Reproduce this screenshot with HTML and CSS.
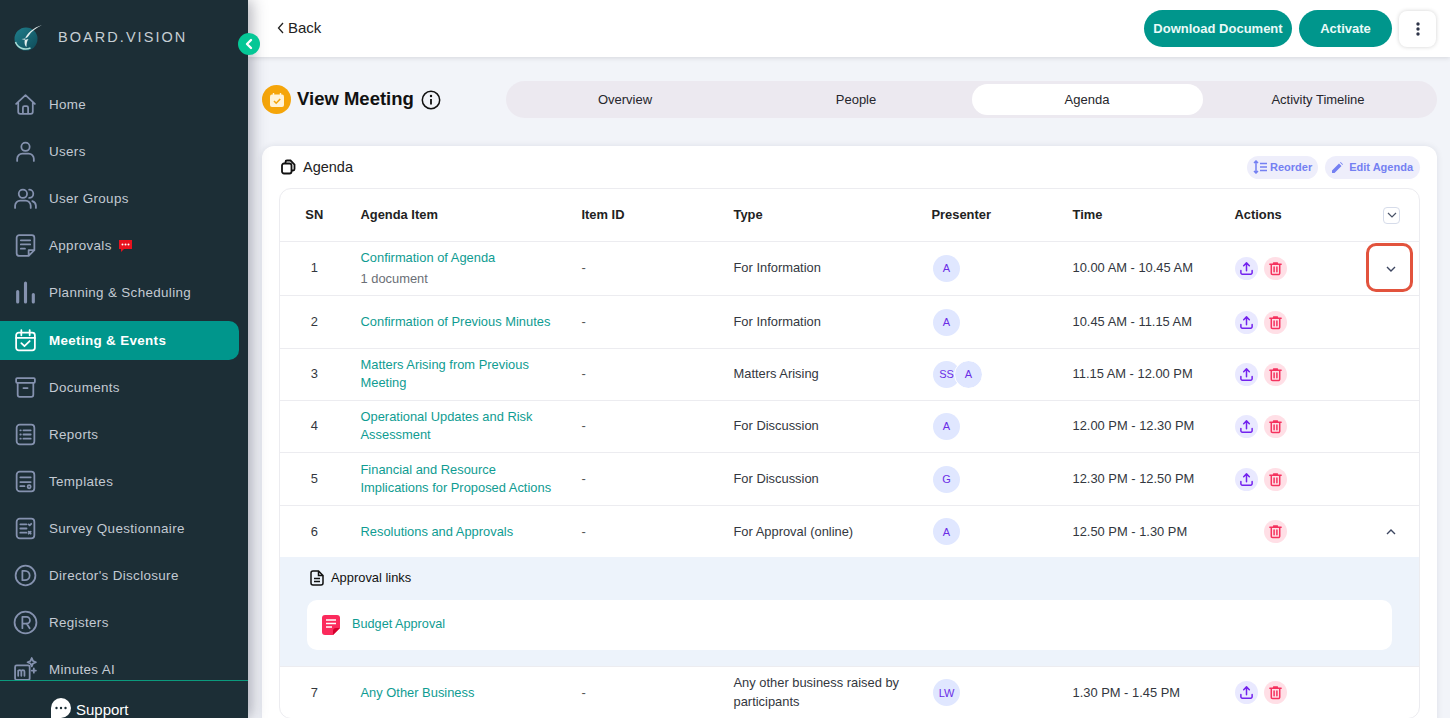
FILE: index.html
```html
<!DOCTYPE html>
<html lang="en">
<head>
    <meta charset="UTF-8">
    <meta name="viewport" content="width=device-width, initial-scale=1.0">
    <title>View Meeting</title>
    <link rel="stylesheet" href="styles.css">
</head>
<body>
<div class="app">

    <!-- Sidebar -->
    <aside class="sidebar">
        <div class="brand">
            <svg class="brand-logo" width="32" height="28" viewBox="0 0 32 28">
                <defs>
                    <linearGradient id="logoFill" x1="0" y1="0" x2="1" y2="1">
                        <stop offset="0" stop-color="#1f7f8c"/>
                        <stop offset="1" stop-color="#0f4a58"/>
                    </linearGradient>
                </defs>
                <circle cx="13" cy="15" r="11.5" fill="url(#logoFill)"/>
                <path d="M2.5 18c2 6 9 8.500 15 6" fill="none" stroke="#a9dcd6" stroke-width="1.600"/>
                <path d="M29 1C20 4 14 9 12 15c-1 4 0 7 1.500 8 0-4 .5-6 2-8-3 1-5 1-7 0 3 0 6-1 7-3 3-5 8-8 13.500-11z" fill="#e3eeee"/>
            </svg>
            <span class="brand-name">BOARD.VISION</span>
        </div>
        <button class="collapse-btn" type="button" aria-label="Collapse">
            <svg width="10" height="12" viewBox="0 0 10 12"><path d="M7 2 3 6l4 4" fill="none" stroke="#fff" stroke-width="2.400" stroke-linecap="round" stroke-linejoin="round"/></svg>
        </button>

        <nav class="nav">
            <a class="nav-item"><svg class="nav-icon" viewBox="0 0 24 24"><path d="M3 11.500 12 3l9 8.500M5 9.500V19a2 2 0 0 0 2 2h10a2 2 0 0 0 2-2V9.500M9.500 21v-6a1.500 1.500 0 0 1 1.500-1.500h2a1.500 1.500 0 0 1 1.500 1.500v6"/></svg>Home</a>
            <a class="nav-item"><svg class="nav-icon" viewBox="0 0 24 24"><circle cx="12" cy="7.500" r="4"/><path d="M4 21v-2a5 5 0 0 1 5-5h6a5 5 0 0 1 5 5v2"/></svg>Users</a>
            <a class="nav-item"><svg class="nav-icon" viewBox="0 0 24 24"><circle cx="9.500" cy="7.500" r="4"/><path d="M2 21v-2a5 5 0 0 1 5-5h5a5 5 0 0 1 5 5v2M15.500 3.500a4 4 0 0 1 0 8M18.500 14.500a5 5 0 0 1 3.500 4.500v2"/></svg>User Groups</a>
            <a class="nav-item"><svg class="nav-icon" viewBox="0 0 24 24"><path d="M15 22H6a2.500 2.500 0 0 1-2.500-2.500v-15A2.500 2.500 0 0 1 6 2h12a2.500 2.500 0 0 1 2.500 2.500V16.500zM15 22v-5.500h5.500M7.500 7h9M7.500 11h9M7.500 15h4"/></svg>Approvals
                <svg class="nav-badge" width="15" height="14" viewBox="0 0 15 14"><path d="M1 1h13v9H6l-3 3v-3H1z" fill="#e8121e"/><circle cx="4.500" cy="5.500" r="1" fill="#fff"/><circle cx="7.500" cy="5.500" r="1" fill="#fff"/><circle cx="10.500" cy="5.500" r="1" fill="#fff"/></svg>
            </a>
            <a class="nav-item"><svg class="nav-icon nav-icon-bars" viewBox="0 0 24 24"><path d="M4.500 11v10M12 3v18M19.500 14v7"/></svg>Planning &amp; Scheduling</a>
            <a class="nav-item active"><svg class="nav-icon" viewBox="0 0 24 24"><rect x="3" y="4.500" width="18" height="17" rx="2.500"/><path d="M3 9.500h18M8 2v5M16 2v5M8 14.500l3 3 5-5"/></svg>Meeting &amp; Events</a>
            <a class="nav-item"><svg class="nav-icon" viewBox="0 0 24 24"><rect x="3" y="3" width="18" height="4.500" rx="1"/><path d="M4.500 7.500V19a2 2 0 0 0 2 2h11a2 2 0 0 0 2-2V7.500M10 12.500h4"/></svg>Documents</a>
            <a class="nav-item"><svg class="nav-icon" viewBox="0 0 24 24"><rect x="3.500" y="2.500" width="17" height="19" rx="3"/><path d="M10 8h7M10 12h7M10 16h7M7 8h.5M7 12h.5M7 16h.5"/></svg>Reports</a>
            <a class="nav-item"><svg class="nav-icon" viewBox="0 0 24 24"><rect x="3.500" y="2.500" width="17" height="19" rx="3"/><path d="M7 8h10M7 12.500h10M7 16.500h4"/><circle cx="15.500" cy="17" r="1.500"/></svg>Templates</a>
            <a class="nav-item"><svg class="nav-icon" viewBox="0 0 24 24"><rect x="3.500" y="2.500" width="17" height="19" rx="3"/><path d="M7 8h6M7 12h6M7 16h6M15 8l1 1 1.500-1.500M15 15l2 2M17 15l-2 2"/></svg>Survey Questionnaire</a>
            <a class="nav-item"><svg class="nav-icon" viewBox="0 0 24 24"><circle cx="12" cy="12" r="9.500"/><path d="M9 7.500v9h2.500a4.500 4.500 0 0 0 0-9z"/></svg>Director's Disclosure</a>
            <a class="nav-item"><svg class="nav-icon" viewBox="0 0 24 24"><circle cx="12" cy="12" r="10.500"/><path d="M9 17.500v-11h4a3 3 0 0 1 0 6.500H9M13 13l3 4.500"/></svg>Registers</a>
            <a class="nav-item"><svg class="nav-icon" viewBox="0 0 24 24"><rect x="2" y="8" width="14" height="14" rx="1.500"/><path d="M5 18v-5M5 14a1.500 1.500 0 0 1 3 0v4M8 14a1.500 1.500 0 0 1 3 0v4M18 1l1.200 2.800L22 5l-2.800 1.200L18 9l-1.200-2.800L14 5l2.800-1.200zM20 11v4M18 13h4"/></svg>Minutes AI</a>
        </nav>

        <div class="support">
            <svg width="20" height="20" viewBox="0 0 20 20"><path d="M10 0a10 10 0 0 1 0 20H0v-10A10 10 0 0 1 10 0z" fill="#fff"/><circle cx="5.500" cy="10" r="1.200" fill="#1c2e36"/><circle cx="10" cy="10" r="1.200" fill="#1c2e36"/><circle cx="14.500" cy="10" r="1.200" fill="#1c2e36"/></svg>
            <span>Support</span>
        </div>
    </aside>

    <div class="main">

        <!-- Top bar -->
        <header class="topbar">
            <a class="back-link"><svg width="7" height="12" viewBox="0 0 7 12"><path d="M6 1 1.500 6 6 11" fill="none" stroke="#222" stroke-width="1.300"/></svg>Back</a>
            <div class="topbar-actions">
                <button class="btn-primary btn-download" type="button">Download Document</button>
                <button class="btn-primary btn-activate" type="button">Activate</button>
                <button class="btn-more" type="button" aria-label="More">
                    <svg width="4" height="14" viewBox="0 0 4 14"><circle cx="2" cy="2" r="1.700"/><circle cx="2" cy="7" r="1.700"/><circle cx="2" cy="12" r="1.700"/></svg>
                </button>
            </div>
        </header>

        <div class="content">

            <!-- Title and tabs -->
            <div class="page-head">
                <div class="page-title">
                    <span class="title-icon">
                        <svg width="16" height="16" viewBox="0 0 16 16"><rect x="1" y="2.500" width="14" height="12.500" rx="2" fill="#fff3d8"/><path d="M4.500 1v3M11.500 1v3" stroke="#fff3d8" stroke-width="1.400"/><path d="M5 9l2.200 2.200L11.200 7" fill="none" stroke="#f5a50a" stroke-width="1.600"/></svg>
                    </span>
                    <h1>View Meeting</h1>
                    <svg width="20" height="20" viewBox="0 0 20 20"><circle cx="10" cy="10" r="8.700" fill="none" stroke="#111" stroke-width="1.500"/><path d="M10 9v5.500" stroke="#111" stroke-width="1.800"/><circle cx="10" cy="6" r="1.200" fill="#111"/></svg>
                </div>
                <div class="tabs">
                    <a class="tab">Overview</a>
                    <a class="tab">People</a>
                    <a class="tab active">Agenda</a>
                    <a class="tab">Activity Timeline</a>
                </div>
            </div>

            <!-- Agenda card -->
            <section class="agenda-card">
                <div class="card-head">
                    <div class="card-title">
                        <svg width="16" height="16" viewBox="0 0 16 16" fill="none" stroke="#111" stroke-width="1.800"><path d="M5.500 4V3a1.500 1.500 0 0 1 1.500-1.500h3.500L14.500 5.500V10a1.500 1.500 0 0 1-1.500 1.500h-1.500"/><rect x="2" y="4.500" width="9.500" height="10" rx="2"/></svg>
                        Agenda
                    </div>
                    <div class="card-actions">
                        <a class="chip chip-reorder">
                            <svg width="14" height="14" viewBox="0 0 14 14" fill="none" stroke="#7480f2" stroke-width="1.500"><path d="M3 1v12M1 3l2-2 2 2M1 11l2 2 2-2M7 3.500h7M7 7h7M7 10.500h7"/></svg>
                            Reorder
                        </a>
                        <a class="chip chip-edit">
                            <svg width="11" height="11" viewBox="0 0 11 11"><path d="M0 11V8.500L7 1.500 9.500 4l-7 7zM8 .5l.7-.4 2.200 2.200-.4.7z" fill="#7480f2"/></svg>
                            Edit Agenda
                        </a>
                    </div>
                </div>

                <div class="table-wrap">
                    <table class="agenda-table">
                        <colgroup>
                            <col class="col-sn"><col class="col-item"><col class="col-id"><col class="col-type"><col class="col-presenter"><col class="col-time"><col class="col-actions"><col class="col-toggle">
                        </colgroup>
                        <thead>
                            <tr>
                                <th class="cell-sn">SN</th>
                                <th>Agenda Item</th>
                                <th>Item ID</th>
                                <th>Type</th>
                                <th>Presenter</th>
                                <th>Time</th>
                                <th>Actions</th>
                                <th class="cell-toggle">
                                    <span class="toggle-box"><svg width="10" height="6" viewBox="0 0 10 6"><path d="M1 1l4 4 4-4" fill="none" stroke="#4a5468" stroke-width="1.200"/></svg></span>
                                </th>
                            </tr>
                        </thead>
                        <tbody>
                            <tr class="row-first">
                                <td class="cell-sn">1</td>
                                <td><a class="item-link">Confirmation of Agenda</a><div class="item-sub">1 document</div></td>
                                <td class="cell-muted">-</td>
                                <td>For Information</td>
                                <td><div class="avatars"><span class="avatar">A</span></div></td>
                                <td>10.00 AM - 10.45 AM</td>
                                <td><div class="actions">
                                    <span class="act act-upload"><svg viewBox="0 0 16 16"><path d="M8 10.500V2.500M5 5l3-3 3 3M2 10v2.500A1.500 1.500 0 0 0 3.500 14h9a1.500 1.500 0 0 0 1.500-1.500V10"/></svg></span>
                                    <span class="act act-delete"><svg viewBox="0 0 16 16"><path d="M2 3.500h12M6 3.500V2h4v1.500M3.500 3.500V13a1.500 1.500 0 0 0 1.500 1.500h6a1.500 1.500 0 0 0 1.500-1.500V3.500M6.500 6.500v5M9.500 6.500v5"/></svg></span>
                                </div></td>
                                <td class="cell-toggle">
                                    <svg width="10" height="6" viewBox="0 0 10 6"><path d="M1 1l4 4 4-4" fill="none" stroke="#3d4660" stroke-width="1.400"/></svg>
                                    <span class="highlight-box"></span>
                                </td>
                            </tr>
                            <tr class="row-tall">
                                <td class="cell-sn">2</td>
                                <td><a class="item-link">Confirmation of Previous Minutes</a></td>
                                <td class="cell-muted">-</td>
                                <td>For Information</td>
                                <td><div class="avatars"><span class="avatar">A</span></div></td>
                                <td>10.45 AM - 11.15 AM</td>
                                <td><div class="actions">
                                    <span class="act act-upload"><svg viewBox="0 0 16 16"><path d="M8 10.500V2.500M5 5l3-3 3 3M2 10v2.500A1.500 1.500 0 0 0 3.500 14h9a1.500 1.500 0 0 0 1.500-1.500V10"/></svg></span>
                                    <span class="act act-delete"><svg viewBox="0 0 16 16"><path d="M2 3.500h12M6 3.500V2h4v1.500M3.500 3.500V13a1.500 1.500 0 0 0 1.500 1.500h6a1.500 1.500 0 0 0 1.500-1.500V3.500M6.500 6.500v5M9.500 6.500v5"/></svg></span>
                                </div></td>
                                <td></td>
                            </tr>
                            <tr>
                                <td class="cell-sn">3</td>
                                <td><a class="item-link">Matters Arising from Previous Meeting</a></td>
                                <td class="cell-muted">-</td>
                                <td>Matters Arising</td>
                                <td><div class="avatars"><span class="avatar">SS</span><span class="avatar avatar-over">A</span></div></td>
                                <td>11.15 AM - 12.00 PM</td>
                                <td><div class="actions">
                                    <span class="act act-upload"><svg viewBox="0 0 16 16"><path d="M8 10.500V2.500M5 5l3-3 3 3M2 10v2.500A1.500 1.500 0 0 0 3.500 14h9a1.500 1.500 0 0 0 1.500-1.500V10"/></svg></span>
                                    <span class="act act-delete"><svg viewBox="0 0 16 16"><path d="M2 3.500h12M6 3.500V2h4v1.500M3.500 3.500V13a1.500 1.500 0 0 0 1.500 1.500h6a1.500 1.500 0 0 0 1.500-1.500V3.500M6.500 6.500v5M9.500 6.500v5"/></svg></span>
                                </div></td>
                                <td></td>
                            </tr>
                            <tr>
                                <td class="cell-sn">4</td>
                                <td><a class="item-link">Operational Updates and Risk Assessment</a></td>
                                <td class="cell-muted">-</td>
                                <td>For Discussion</td>
                                <td><div class="avatars"><span class="avatar">A</span></div></td>
                                <td>12.00 PM - 12.30 PM</td>
                                <td><div class="actions">
                                    <span class="act act-upload"><svg viewBox="0 0 16 16"><path d="M8 10.500V2.500M5 5l3-3 3 3M2 10v2.500A1.500 1.500 0 0 0 3.500 14h9a1.500 1.500 0 0 0 1.500-1.500V10"/></svg></span>
                                    <span class="act act-delete"><svg viewBox="0 0 16 16"><path d="M2 3.500h12M6 3.500V2h4v1.500M3.500 3.500V13a1.500 1.500 0 0 0 1.500 1.500h6a1.500 1.500 0 0 0 1.500-1.500V3.500M6.500 6.500v5M9.500 6.500v5"/></svg></span>
                                </div></td>
                                <td></td>
                            </tr>
                            <tr class="row-tall">
                                <td class="cell-sn">5</td>
                                <td><a class="item-link">Financial and Resource Implications for Proposed Actions</a></td>
                                <td class="cell-muted">-</td>
                                <td>For Discussion</td>
                                <td><div class="avatars"><span class="avatar">G</span></div></td>
                                <td>12.30 PM - 12.50 PM</td>
                                <td><div class="actions">
                                    <span class="act act-upload"><svg viewBox="0 0 16 16"><path d="M8 10.500V2.500M5 5l3-3 3 3M2 10v2.500A1.500 1.500 0 0 0 3.500 14h9a1.500 1.500 0 0 0 1.500-1.500V10"/></svg></span>
                                    <span class="act act-delete"><svg viewBox="0 0 16 16"><path d="M2 3.500h12M6 3.500V2h4v1.500M3.500 3.500V13a1.500 1.500 0 0 0 1.500 1.500h6a1.500 1.500 0 0 0 1.500-1.500V3.500M6.500 6.500v5M9.500 6.500v5"/></svg></span>
                                </div></td>
                                <td></td>
                            </tr>
                            <tr class="row-open">
                                <td class="cell-sn">6</td>
                                <td><a class="item-link">Resolutions and Approvals</a></td>
                                <td class="cell-muted">-</td>
                                <td>For Approval (online)</td>
                                <td><div class="avatars"><span class="avatar">A</span></div></td>
                                <td>12.50 PM - 1.30 PM</td>
                                <td><div class="actions">
                                    <span class="act act-spacer"></span>
                                    <span class="act act-delete"><svg viewBox="0 0 16 16"><path d="M2 3.500h12M6 3.500V2h4v1.500M3.500 3.500V13a1.500 1.500 0 0 0 1.500 1.500h6a1.500 1.500 0 0 0 1.500-1.500V3.500M6.500 6.500v5M9.500 6.500v5"/></svg></span>
                                </div></td>
                                <td class="cell-toggle"><svg width="10" height="6" viewBox="0 0 10 6"><path d="M1 5l4-4 4 4" fill="none" stroke="#3d4660" stroke-width="1.400"/></svg></td>
                            </tr>
                            <tr class="row-detail">
                                <td colspan="8">
                                    <div class="detail-title">
                                        <svg width="14" height="16" viewBox="0 0 14 16" fill="none" stroke="#111" stroke-width="1.500"><path d="M8.500 1H3a2 2 0 0 0-2 2v10a2 2 0 0 0 2 2h8a2 2 0 0 0 2-2V5.500zM8.500 1v4.500H13M4 8.500h6M4 11.500h6"/></svg>
                                        Approval links
                                    </div>
                                    <div class="detail-card">
                                        <svg width="18" height="20" viewBox="0 0 18 20"><path d="M3 0h12a3 3 0 0 1 3 3v10l-7 7H3a3 3 0 0 1-3-3V3a3 3 0 0 1 3-3z" fill="#fb2a5c"/><path d="M11 20v-4a3 3 0 0 1 3-3h4z" fill="#d3002c"/><path d="M4 5h10M4 8.500h10M4 12h6" stroke="#fff" stroke-width="1.500"/></svg>
                                        <a class="item-link">Budget Approval</a>
                                    </div>
                                </td>
                            </tr>
                            <tr class="row-last">
                                <td class="cell-sn">7</td>
                                <td><a class="item-link">Any Other Business</a></td>
                                <td class="cell-muted">-</td>
                                <td>Any other business raised by participants</td>
                                <td><div class="avatars"><span class="avatar">LW</span></div></td>
                                <td>1.30 PM - 1.45 PM</td>
                                <td><div class="actions">
                                    <span class="act act-upload"><svg viewBox="0 0 16 16"><path d="M8 10.500V2.500M5 5l3-3 3 3M2 10v2.500A1.500 1.500 0 0 0 3.500 14h9a1.500 1.500 0 0 0 1.500-1.500V10"/></svg></span>
                                    <span class="act act-delete"><svg viewBox="0 0 16 16"><path d="M2 3.500h12M6 3.500V2h4v1.500M3.500 3.500V13a1.500 1.500 0 0 0 1.500 1.500h6a1.500 1.500 0 0 0 1.500-1.500V3.500M6.500 6.500v5M9.500 6.500v5"/></svg></span>
                                </div></td>
                                <td></td>
                            </tr>
                        </tbody>
                    </table>
                </div>
            </section>
        </div>
    </div>
</div>
</body>
</html>
```

FILE: styles.css
```css
* {
    box-sizing: border-box;
}

html, body {
    height: 100%;
}

body {
    margin: 0;
    overflow: hidden;
    font-family: "Liberation Sans", Arial, sans-serif;
    font-size: 12.9px;
    color: #2b2f36;
    background-color: #f2f4f9;
}

button {
    font-family: inherit;
    border: none;
    cursor: pointer;
}

.app {
    display: flex;
    height: 718px;
    overflow: hidden;
}

/* Sidebar */
.sidebar {
    position: relative;
    z-index: 2;
    flex: 0 0 248px;
    display: flex;
    flex-direction: column;
    height: 100%;
    background-color: #1c2e36;
    box-shadow: 4px 0 14px rgba(40, 40, 60, 0.35);
}

.brand {
    flex: 0 0 81px;
    display: flex;
    align-items: flex-start;
    padding: 24px 0 0 13px;
}

.brand-name {
    margin: 5px 0 0 13px;
    font-size: 14.5px;
    letter-spacing: 2.05px;
    color: #c6ced4;
}

.collapse-btn {
    position: absolute;
    top: 33px;
    left: 238px;
    display: flex;
    align-items: center;
    justify-content: center;
    width: 22px;
    height: 22px;
    padding: 0;
    border-radius: 50%;
    background-color: #05c796;
}

.nav {
    flex: 1;
    min-height: 0;
    overflow: hidden;
}

.nav-item {
    display: flex;
    align-items: center;
    gap: 11.5px;
    height: 47.1px;
    padding-left: 12.5px;
    margin-right: 9px;
    font-size: 13.4px;
    letter-spacing: 0.35px;
    color: #c3cad3;
}

.nav-item.active {
    position: relative;
    z-index: 0;
    font-weight: bold;
    color: #fff;
}

.nav-item.active::before {
    content: "";
    position: absolute;
    z-index: -1;
    left: 0;
    right: 0;
    top: 5px;
    bottom: 4px;
    background-color: #00968c;
    border-radius: 0 10px 10px 0;
}

.nav-icon {
    flex: 0 0 25px;
    width: 25px;
    height: 25px;
    fill: none;
    stroke: #8592af;
    stroke-width: 1.700;
    stroke-linecap: round;
    stroke-linejoin: round;
}

.nav-icon-bars {
    stroke-width: 3;
}

.nav-item.active .nav-icon {
    stroke: #fff;
}

.nav-badge {
    margin-left: -5px;
}

.support {
    flex: 0 0 36px;
    display: flex;
    align-items: flex-start;
    gap: 5px;
    padding: 17px 0 0 51px;
    border-top: 1px solid #0b9a7d;
    font-size: 15px;
    color: #fff;
    background-color: #1c2e36;
}

.support span {
    margin-top: 3px;
}

/* Main column */
.main {
    flex: 1;
    min-width: 0;
    display: flex;
    flex-direction: column;
}

.topbar {
    flex: 0 0 57px;
    display: flex;
    align-items: center;
    justify-content: space-between;
    padding: 0 14px 0 29px;
    background-color: #fff;
    box-shadow: 0 1px 5px rgba(0, 0, 0, 0.12);
}

.back-link {
    display: flex;
    align-items: center;
    gap: 4px;
    margin-bottom: 2px;
    font-size: 15px;
    color: #222;
}

.topbar-actions {
    display: flex;
    align-items: center;
    gap: 7px;
}

.btn-primary {
    height: 37px;
    border-radius: 19px;
    font-size: 13px;
    font-weight: bold;
    color: #eafaf8;
    background-color: #00968c;
}

.btn-download {
    width: 148px;
    padding: 0;
}

.btn-activate {
    width: 93px;
}

.btn-more {
    display: flex;
    align-items: center;
    justify-content: center;
    width: 37px;
    height: 36px;
    padding: 0;
    border-radius: 8px;
    background-color: #fff;
    box-shadow: 0 0 4px rgba(0, 0, 0, 0.18);
}

.btn-more svg {
    fill: #2d3448;
}

.content {
    flex: 1;
    min-height: 0;
    padding: 24px 13px 0 14px;
}

.page-head {
    display: flex;
    align-items: center;
    height: 37px;
}

.page-title {
    flex: 0 0 244px;
    display: flex;
    align-items: center;
    gap: 6px;
}

.page-title h1 {
    margin: -2px 1px 0 0;
    font-size: 18.5px;
    color: #111;
}

.title-icon {
    display: flex;
    align-items: center;
    justify-content: center;
    width: 29px;
    height: 29px;
    border-radius: 50%;
    background-color: #f5a50a;
}

.tabs {
    flex: 1;
    display: flex;
    height: 37px;
    padding: 3px 3.500px;
    border-radius: 19px;
    background-color: #ece9f0;
}

.tab {
    flex: 1;
    display: flex;
    align-items: center;
    justify-content: center;
    font-size: 13px;
    color: #26262c;
    border-radius: 16px;
}

.tab.active {
    background-color: #fff;
}

/* Agenda card */
.agenda-card {
    margin-top: 28px;
    padding: 0 17px;
    background-color: #fff;
    border-radius: 12px 12px 0 0;
    box-shadow: 0 0 6px rgba(30, 40, 70, 0.1);
    height: 640px;
}

.card-head {
    display: flex;
    align-items: center;
    justify-content: space-between;
    height: 42px;
}

.card-title {
    display: flex;
    align-items: center;
    gap: 7px;
    padding-left: 1px;
    font-size: 14.5px;
    color: #222;
}

.card-actions {
    display: flex;
    gap: 7px;
}

.chip {
    display: flex;
    align-items: center;
    height: 23px;
    padding: 0 7px;
    border-radius: 12px;
    font-size: 11px;
    font-weight: bold;
    color: #7480f2;
    background-color: #eeeefb;
}

.chip-reorder {
    gap: 3px;
    padding: 0 6px 0 6.5px;
}

.chip-edit {
    gap: 6px;
}

.table-wrap {
    border: 1px solid #ececf0;
    border-radius: 12px;
    overflow: hidden;
}

.agenda-table {
    width: 100%;
    table-layout: fixed;
    border-collapse: collapse;
}

.col-sn { width: 68.5px; }
.col-item { width: 221px; }
.col-id { width: 152px; }
.col-type { width: 198px; }
.col-presenter { width: 141px; }
.col-time { width: 162px; }
.col-actions { width: 135px; }

.agenda-table th {
    height: 52px;
    padding: 0 12px;
    text-align: left;
    font-size: 12.9px;
    color: #222;
}

.agenda-table td {
    height: 52px;
    padding: 0 12px;
    line-height: 18.500px;
    color: #33373e;
    border-top: 1px solid #ececf0;
}

.agenda-table .row-first td {
    height: 54px;
    padding-top: 1px;
}

.agenda-table .row-tall td {
    height: 53px;
    padding-top: 1px;
}

.agenda-table .row-open td,
.agenda-table .row-last td {
    padding-top: 1px;
}

.agenda-table .cell-sn {
    padding: 0;
    text-align: center;
}

.agenda-table .cell-toggle,
.agenda-table .row-first .cell-toggle,
.agenda-table .row-open .cell-toggle {
    position: relative;
    padding: 0 23px 0 0;
    text-align: right;
}

.agenda-table .cell-muted {
    color: #555;
}

.item-link {
    color: #0f9c92;
}

.item-sub {
    margin-top: 3px;
    color: #6b6f76;
}

.toggle-box {
    display: inline-flex;
    align-items: center;
    justify-content: center;
    width: 17px;
    height: 17px;
    margin-right: -4px;
    border: 1px solid #d6dcea;
    border-radius: 4px;
}

/* Red marker drawn around the row toggle */
.highlight-box {
    position: absolute;
    top: 1px;
    right: 6px;
    width: 47px;
    height: 49px;
    border: 3.500px solid #e2533d;
    border-radius: 10px;
}

.avatars {
    display: flex;
    padding-left: 1.5px;
}

.avatar {
    display: flex;
    align-items: center;
    justify-content: center;
    width: 27px;
    height: 27px;
    border-radius: 50%;
    font-size: 11px;
    color: #6b2ee6;
    background-color: #e0e7ff;
}

.avatar-over {
    margin-left: -5px;
    outline: 1px solid #fff;
}

.actions {
    display: flex;
    gap: 6px;
}

.act {
    display: flex;
    align-items: center;
    justify-content: center;
    width: 23px;
    height: 23px;
    border-radius: 50%;
}

.act svg {
    width: 15px;
    height: 15px;
    fill: none;
    stroke-width: 1.600;
    stroke-linecap: round;
    stroke-linejoin: round;
}

.act-upload {
    background-color: #e9e9ff;
}

.act-upload svg {
    stroke: #7322ee;
}

.act-delete {
    background-color: #ffdfe6;
}

.act-delete svg {
    stroke: #f5325e;
}

.act-spacer {
    visibility: hidden;
}

/* Expanded approval links */
.agenda-table .row-detail td {
    height: 109px;
    padding: 0 27px 1px;
    background-color: #edf3fb;
}

.agenda-table .row-open + .row-detail td {
    border-top: none;
}

.detail-title {
    display: flex;
    align-items: center;
    gap: 7px;
    margin-top: -3px;
    padding-left: 3px;
    color: #111;
}

.detail-card {
    display: flex;
    align-items: center;
    gap: 12px;
    height: 50px;
    margin-top: 12px;
    padding-left: 15px;
    border-radius: 10px;
    background-color: #fff;
}

.detail-card .item-link {
    font-size: 12.7px;
}
```
